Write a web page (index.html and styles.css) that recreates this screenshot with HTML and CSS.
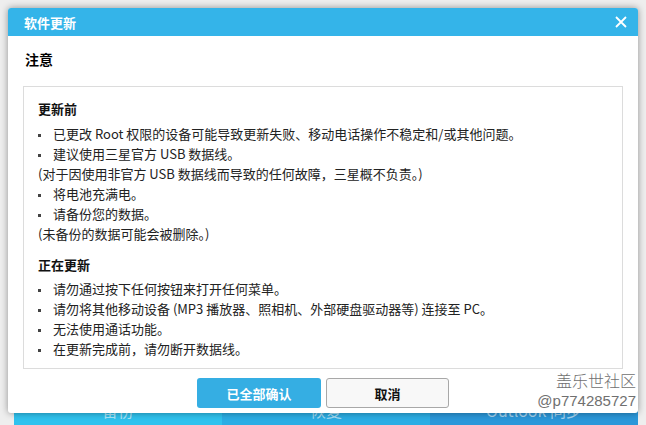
FILE: index.html
```html
<!DOCTYPE html>
<html lang="zh-CN">
<head>
  <meta charset="UTF-8">
  <meta name="viewport" content="width=device-width, initial-scale=1.0">
  <title>软件更新</title>
  <link rel="stylesheet" href="styles.css">
</head>
<body>
  <div class="app">
    <div class="app-main"></div>
    <div class="tabs">
      <div class="tab tab-backup">备份</div>
      <div class="tab tab-restore">恢复</div>
      <div class="tab tab-sync">Outlook 同步</div>
    </div>
  </div>

  <div class="dialog">
    <div class="dialog-title">
      <span>软件更新</span>
      <svg class="close" width="12" height="12" viewBox="0 0 12 12">
        <path d="M1 1 L11 11 M11 1 L1 11" stroke="#fff" stroke-width="1.8" fill="none"/>
      </svg>
    </div>
    <div class="dialog-body">
      <div class="notice">注意</div>
      <div class="info-box">
        <div class="section-title">更新前</div>
        <ul class="notes">
          <li class="dot">已更改 Root 权限的设备可能导致更新失败、移动电话操作不稳定和/或其他问题。</li>
          <li class="dot">建议使用三星官方 USB 数据线。</li>
          <li>(对于因使用非官方 USB 数据线而导致的任何故障，三星概不负责。)</li>
          <li class="dot">将电池充满电。</li>
          <li class="dot">请备份您的数据。</li>
          <li>(未备份的数据可能会被删除。)</li>
        </ul>
        <div class="section-title second">正在更新</div>
        <ul class="notes">
          <li class="dot">请勿通过按下任何按钮来打开任何菜单。</li>
          <li class="dot">请勿将其他移动设备 (MP3 播放器、照相机、外部硬盘驱动器等) 连接至 PC。</li>
          <li class="dot">无法使用通话功能。</li>
          <li class="dot">在更新完成前，请勿断开数据线。</li>
        </ul>
      </div>
      <div class="buttons">
        <button class="btn btn-primary">已全部确认</button>
        <button class="btn btn-cancel">取消</button>
      </div>
    </div>
  </div>

  <div class="watermark">
    <div class="wm-name">盖乐世社区</div>
    <div class="wm-user">@p774285727</div>
  </div>
</body>
</html>
```

FILE: styles.css
```css
body {
  margin: 0;
  padding: 0;
  background-color: #eeeeee;
  font-family: "Noto Sans CJK SC", "Liberation Sans", sans-serif;
  color: #222;
  overflow: hidden;
}
.app {
  display: flex;
  flex-direction: column;
  height: 425px;
}
.app-main {
  flex: 1;
}
.tabs {
  display: flex;
  height: 40px;
  margin: 0 8px 0 14px;
}
.tab {
  flex: 1;
  color: rgba(255, 255, 255, 0.6);
  font-size: 16px;
  line-height: 16px;
  padding-top: 17px;
  text-align: center;
}
.tab-backup {
  background-color: #2fc2ee;
}
.tab-restore {
  background-color: #2badE4;
}
.tab-sync {
  background-color: #2b97d9;
}

.dialog {
  position: absolute;
  left: 8px;
  top: 8px;
  width: 630px;
  height: 405px;
  background-color: #fff;
  border-radius: 3px;
  box-shadow: 0 0 7px rgba(0, 0, 0, 0.4);
  overflow: hidden;
}
.dialog-title {
  display: flex;
  justify-content: space-between;
  align-items: center;
  height: 28px;
  padding: 0 11px 0 16px;
  background-color: #34b4e9;
  color: #fff;
  font-size: 13px;
  font-weight: bold;
}
.dialog-body {
  padding: 0 15px;
}
.notice {
  margin-top: 13px;
  padding-left: 2px;
  font-size: 14px;
  font-weight: bold;
  line-height: 20px;
  color: #000;
}
.info-box {
  margin-top: 17px;
  height: 259px;
  padding: 12px 14px 10px;
  border: 1px solid #dcdcdc;
  font-size: 13px;
}
.section-title {
  font-weight: bold;
  line-height: 20px;
  margin-bottom: 5px;
  color: #111;
}
.section-title.second {
  margin-top: 11px;
  margin-bottom: 4px;
}
.notes {
  list-style: none;
  margin: 0;
  padding: 0;
}
.notes li {
  display: flex;
  align-items: center;
  line-height: 20px;
  white-space: nowrap;
}
.notes li.dot::before {
  content: "";
  width: 3px;
  height: 3px;
  margin: 2px 12px 0 0;
  background-color: #444;
}
.buttons {
  display: flex;
  justify-content: center;
  gap: 5px;
  margin-top: 9px;
}
.btn {
  height: 30px;
  border-radius: 3px;
  font-family: inherit;
  font-size: 13px;
  font-weight: bold;
  cursor: pointer;
}
.btn-primary {
  width: 124px;
  background-color: #35aee3;
  border: none;
  color: #fff;
}
.btn-cancel {
  width: 123px;
  background-color: #f8f8f8;
  border: 1px solid #a8a8a8;
  color: #111;
}

.watermark {
  position: absolute;
  right: 10px;
  top: 369px;
  text-align: right;
  color: #707070;
  text-shadow: 0 0 2px #fff, 0 0 2px #fff;
}
.wm-name {
  font-size: 16px;
  line-height: 23px;
  font-weight: 300;
}
.wm-user {
  font-family: "Liberation Sans", sans-serif;
  font-size: 15px;
  line-height: 18px;
}
```
